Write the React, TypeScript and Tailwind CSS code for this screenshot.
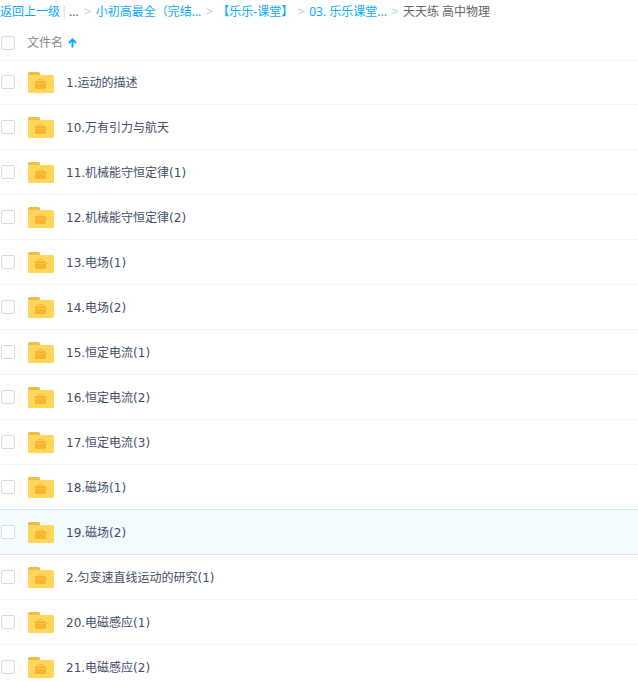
import React, { useState } from 'react';
import clsx from 'clsx';

const folders = [
  '1.运动的描述',
  '10.万有引力与航天',
  '11.机械能守恒定律(1)',
  '12.机械能守恒定律(2)',
  '13.电场(1)',
  '14.电场(2)',
  '15.恒定电流(1)',
  '16.恒定电流(2)',
  '17.恒定电流(3)',
  '18.磁场(1)',
  '19.磁场(2)',
  '2.匀变速直线运动的研究(1)',
  '20.电磁感应(1)',
  '21.电磁感应(2)',
];

const parents = ['小初高最全（完结...', '【乐乐-课堂】', '03. 乐乐课堂...'];

const FolderIcon: React.FC = () => (
  <svg width="26" height="21" viewBox="0 0 26 21" className="block shrink-0" aria-hidden="true">
    <path d="M0 1.5A1.5 1.5 0 0 1 1.5 0h9A1.5 1.5 0 0 1 12 1.5V7H0z" fill="#edbd4a" />
    <path d="M0 3h24.5A1.5 1.5 0 0 1 26 4.5v15a1.5 1.5 0 0 1-1.5 1.5h-23A1.5 1.5 0 0 1 0 19.5z" fill="#ffd659" />
    <path d="M10 9.5V8.5A1 1 0 0 1 11 7.5h3a1 1 0 0 1 1 1v1" fill="none" stroke="#f7b82f" />
    <path d="M8 9h9a1 1 0 0 1 1 1v6a1 1 0 0 1-1 1H8a1 1 0 0 1-1-1v-6a1 1 0 0 1 1-1z" fill="#f7b430" />
    <path d="M7 11.5h13" stroke="#fbc131" />
  </svg>
);

const Separator: React.FC = () => (
  <span className="w-4 shrink-0 text-center text-[#b4cbec]">&gt;</span>
);

const Checkbox: React.FC<{ label: string; className?: string }> = ({ label, className }) => (
  <input
    type="checkbox"
    aria-label={label}
    className={clsx(
      'block size-3.5 appearance-none rounded-xs border border-[#d4dbe5] bg-white/50 checked:border-[#09aaff] checked:bg-[#09aaff]',
      className
    )}
  />
);

const App: React.FC = () => {
  const [active, setActive] = useState(10);

  return (
    <div className="bg-white font-['Noto_Sans','Noto_Sans_CJK_SC',sans-serif] text-xs text-[#424e67]" lang="zh-CN">
      {/* Breadcrumb */}
      <nav className="flex h-[26px] overflow-hidden whitespace-nowrap leading-[23px] text-[#09aaff]">
        <a href="#up">返回上一级</a>
        <span className="w-2 text-center text-[#c4d8f2]">|</span>
        <span className="mx-px text-[#666]">...</span>
        {parents.map((name) => (
          <React.Fragment key={name}>
            <Separator />
            <a href="#folder">{name}</a>
          </React.Fragment>
        ))}
        <Separator />
        <span className="text-[#666]">天天练 高中物理</span>
      </nav>

      {/* File list */}
      <table className="w-full border-separate border-spacing-0 text-left">
        <thead>
          <tr className="h-[34px]">
            <th className="w-[27px] p-0 pl-px">
              <Checkbox label="全选" />
            </th>
            <th className="p-0 font-normal text-[#888]" aria-sort="ascending">
              <button type="button" className="flex items-center gap-[5px]">
                文件名
                <svg width="9" height="10" viewBox="0 0 9 10" aria-hidden="true">
                  <path d="M4.5 9.5V2M1 5l3.5-3.5L8 5" fill="none" stroke="#09aaff" strokeWidth="2" />
                </svg>
              </button>
            </th>
          </tr>
        </thead>
        <tbody className="font-['DejaVu_Sans','Noto_Sans_CJK_SC',sans-serif]">
          {folders.map((name, index) => {
            const cell = clsx(
              'h-[45px] border-y p-0',
              index === 0 ? 'border-t-[#f2f6fd]' : 'border-t-transparent',
              index === active || index + 1 === active ? 'border-b-[#d6e7f8]' : 'border-b-[#f2f6fd]',
              index === active && 'bg-[#f3fbff]'
            );

            return (
              <tr key={name} onMouseEnter={() => setActive(index)}>
                <td className={clsx(cell, 'pl-px')}>
                  <Checkbox label={name} className="mb-px" />
                </td>
                <td className={cell}>
                  <a href="#open" className="flex items-center gap-3 pl-px">
                    <FolderIcon />
                    <span className="pt-0.5 leading-[21px]">{name}</span>
                  </a>
                </td>
              </tr>
            );
          })}
        </tbody>
      </table>
    </div>
  );
};

export default App;
